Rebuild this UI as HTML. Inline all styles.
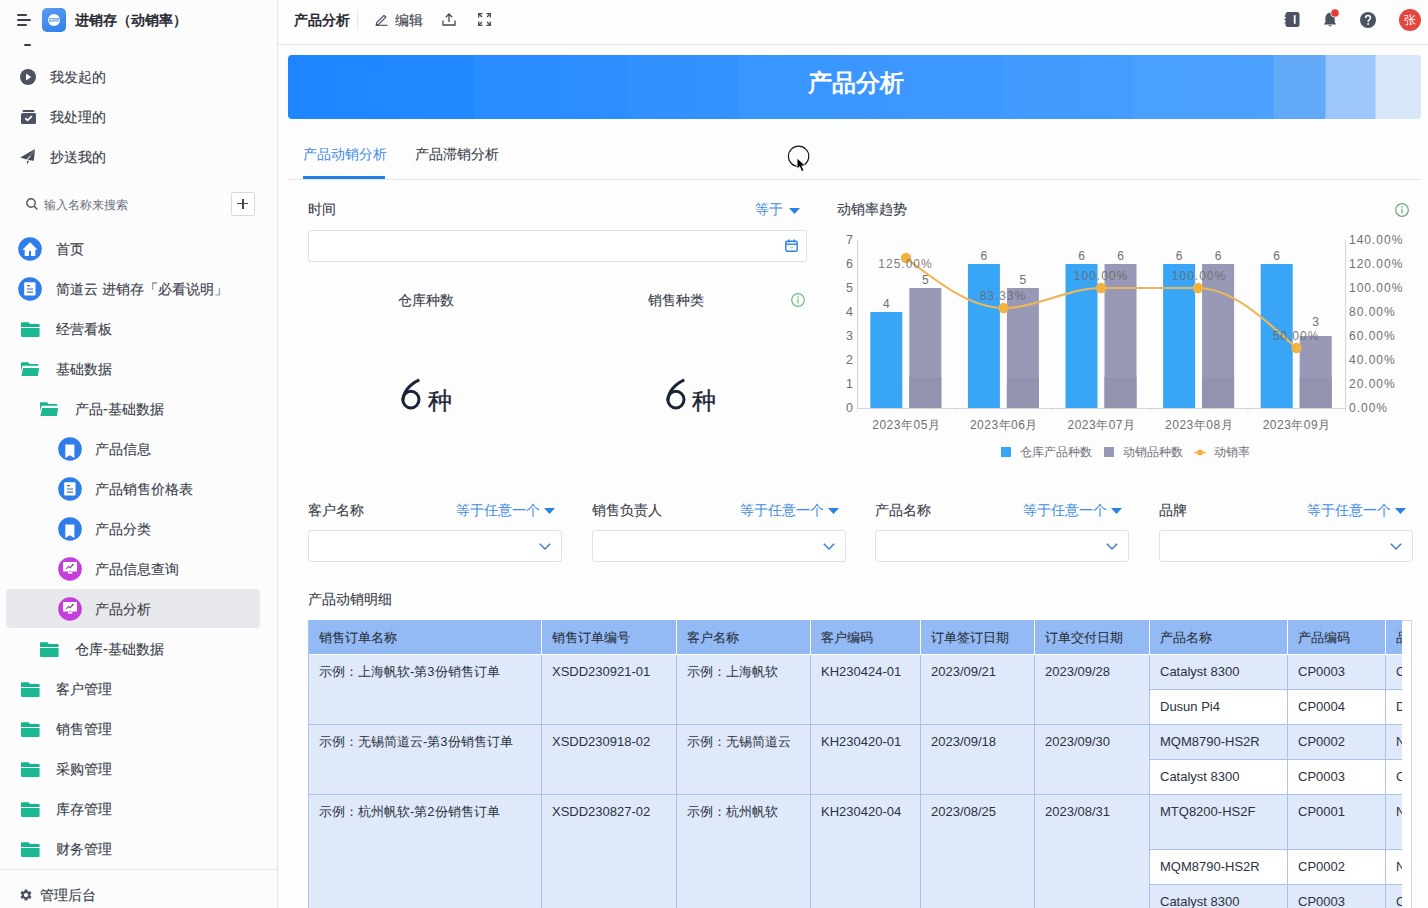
<!DOCTYPE html>
<html><head><meta charset="utf-8">
<style>
*{box-sizing:border-box;margin:0;padding:0}
html,body{width:1428px;height:908px;overflow:hidden;background:#fdfdfd;font-family:"Liberation Sans",sans-serif}
.a{position:absolute;white-space:nowrap;line-height:1}
.t14{font-size:14px;color:#3a3f4b;-webkit-text-stroke:.12px currentColor}
.t13{font-size:13px;color:#3a3f4b;-webkit-text-stroke:.1px currentColor}
.t12{font-size:12px}
svg{position:absolute;overflow:visible}
#side{position:absolute;left:0;top:0;width:277px;height:908px;background:#fcfcfc}
#sideb{position:absolute;left:277px;top:0;width:1px;height:908px;background:#e6e6e6}
.vl,.cl,.yl,.rl,.pl{font-family:"Liberation Sans",sans-serif;font-size:12px;fill:#707070}
.vl,.pl{text-anchor:middle}
.pl{letter-spacing:1px;fill:#6a6a6a;fill-opacity:.9}
.cl{font-size:12px;text-anchor:middle;letter-spacing:.5px}
.yl{text-anchor:end;font-size:12.5px}
.rl{letter-spacing:1px}
</style></head><body>
<!-- SIDEBAR -->
<div id="side"></div>
<div id="sideb"></div>
<!-- hamburger -->
<div class="a" style="left:17px;top:14px;width:10px;height:2px;background:#3b3f48;border-radius:1px"></div>
<div class="a" style="left:17px;top:19px;width:14px;height:2px;background:#3b3f48;border-radius:1px"></div>
<div class="a" style="left:17px;top:24px;width:10px;height:2px;background:#3b3f48;border-radius:1px"></div>
<!-- app icon -->
<div class="a" style="left:42px;top:8px;width:24px;height:24px;border-radius:5px;background:linear-gradient(160deg,#5b9cf3,#2f7fea)"></div>
<div class="a" style="left:48px;top:14px;width:12px;height:12px;border-radius:6px;background:#fff"></div>
<div class="a" style="left:49px;top:17px;width:10px;font-size:5px;font-weight:bold;color:#4a8ef0;text-align:center;line-height:6px">ERP</div>
<div class="a" style="left:75px;top:13px;font-size:14px;color:#1f2430;-webkit-text-stroke:.55px #1f2430">进销存（动销率）</div>
<!-- tiny dash -->
<div class="a" style="left:24px;top:44px;width:7px;height:2px;background:#3b3f48;border-radius:1px"></div>

<!-- personal items -->
<svg style="left:20px;top:69px" width="16" height="16" viewBox="0 0 16 16"><circle cx="8" cy="8" r="8" fill="#4b5261"/><path d="M6 4.6v6.8l5.2-3.4z" fill="#fff"/></svg>
<div class="a t14" style="left:50px;top:70px">我发起的</div>
<svg style="left:21px;top:110px" width="15" height="14" viewBox="0 0 15 14"><rect x="1.5" y="0" width="12" height="2" rx="1" fill="#4b5261"/><rect x="0" y="3" width="15" height="11" rx="1.5" fill="#4b5261"/><path d="M4.3 8.2l2.3 2.2 4.2-4.2" stroke="#fff" stroke-width="1.7" fill="none"/></svg>
<div class="a t14" style="left:50px;top:110px">我处理的</div>
<svg style="left:20px;top:149px" width="16" height="16" viewBox="0 0 16 16"><path d="M0.2 8.4L15 0.1 10.2 6.5 6.6 10.6z" fill="#474d5a"/><path d="M15 0.1L13.8 11.8 7.6 10.9 10.9 6.9z" fill="#474d5a"/><path d="M6.8 12.1L8.9 11.7 7.5 15.4z" fill="#474d5a"/><path d="M15 0.1L10 7.1 11.1 7.3z" fill="#474d5a"/></svg>
<div class="a t14" style="left:50px;top:150px">抄送我的</div>

<!-- search -->
<svg style="left:26px;top:198px" width="12" height="12" viewBox="0 0 12 12"><circle cx="5" cy="5" r="4.2" stroke="#4b5261" stroke-width="1.4" fill="none"/><path d="M8.2 8.2l3.2 3.2" stroke="#4b5261" stroke-width="1.4"/></svg>
<div class="a t12" style="left:44px;top:199px;color:#6b7180">输入名称来搜索</div>
<div class="a" style="left:231px;top:192px;width:24px;height:24px;border:1px solid #d9dadd;border-radius:2px;background:#fff"></div>
<div class="a" style="left:237px;top:203px;width:11px;height:1.2px;background:#3f4552"></div>
<div class="a" style="left:242.4px;top:198.5px;width:1.2px;height:10.5px;background:#3f4552"></div>

<!-- nav tree -->
<div class="a" style="left:6px;top:589px;width:254px;height:39px;background:#e7e8eb;border-radius:4px"></div>
<svg style="left:18px;top:237px" width="24" height="24" viewBox="0 0 24 24"><circle cx="12" cy="12" r="11.8" fill="#2f7ceb"/><path d="M12 5.2L4.4 12.7h2.3v6.2h4.3v-4.2a1 1 0 0 1 2 0v4.2h4.3v-6.2h2.3z" fill="#fff"/></svg>
<div class="a t14" style="left:56px;top:242px">首页</div>
<svg style="left:18px;top:277px" width="24" height="24" viewBox="0 0 24 24"><circle cx="12" cy="12" r="11.8" fill="#2f7ceb"/><rect x="6.2" y="5.3" width="11.3" height="13.2" rx=".8" fill="#fff"/><rect x="8.9" y="8" width="3.1" height="1.3" fill="#5a6a90"/><rect x="8.9" y="11.3" width="6.1" height="1.4" fill="#6d8fd8"/><rect x="8.9" y="14.4" width="6.1" height="1.4" fill="#6f7fa8"/></svg>
<div class="a t14" style="left:56px;top:282px">简道云 进销存「必看说明」</div>
<svg style="left:21px;top:322px" width="19" height="15" viewBox="0 0 19 15"><path d="M0 1.1Q0 .3 .8 .3h6.7l1.4 1.6h9q.7 0 .7.7v2.3H0z" fill="#15b48f"/><path d="M0 5.9h18.6v8.2q0 .8-.8.8H.8q-.8 0-.8-.8z" fill="#1bb893"/></svg>
<div class="a t14" style="left:56px;top:322px">经营看板</div>
<svg style="left:21px;top:362px" width="19" height="15" viewBox="0 0 19 15"><path d="M0 1Q0 .3 .7 .3h6.4l1.4 1.6h8.1q.7 0 .7.7v1.1H1.6L0 9z" fill="#15b48f"/><path d="M2.1 6H18.2L16.9 14H.4z" fill="#1bb893"/></svg>
<div class="a t14" style="left:56px;top:362px">基础数据</div>
<svg style="left:40px;top:402px" width="19" height="15" viewBox="0 0 19 15"><path d="M0 1Q0 .3 .7 .3h6.4l1.4 1.6h8.1q.7 0 .7.7v1.1H1.6L0 9z" fill="#15b48f"/><path d="M2.1 6H18.2L16.9 14H.4z" fill="#1bb893"/></svg>
<div class="a t14" style="left:75px;top:402px">产品-基础数据</div>
<svg style="left:58px;top:437px" width="24" height="24" viewBox="0 0 24 24"><circle cx="12" cy="12" r="11.8" fill="#2f7ceb"/><path d="M7.3 7.6h9.1v13.5l-4.55-2.8-4.55 2.8z" fill="#fff"/></svg>
<div class="a t14" style="left:95px;top:442px">产品信息</div>
<svg style="left:58px;top:477px" width="24" height="24" viewBox="0 0 24 24"><circle cx="12" cy="12" r="11.8" fill="#2f7ceb"/><rect x="6.2" y="5.3" width="11.3" height="13.2" rx=".8" fill="#fff"/><rect x="8.9" y="8" width="3.1" height="1.3" fill="#5a6a90"/><rect x="8.9" y="11.3" width="6.1" height="1.4" fill="#6d8fd8"/><rect x="8.9" y="14.4" width="6.1" height="1.4" fill="#6f7fa8"/></svg>
<div class="a t14" style="left:95px;top:482px">产品销售价格表</div>
<svg style="left:58px;top:517px" width="24" height="24" viewBox="0 0 24 24"><circle cx="12" cy="12" r="11.8" fill="#2f7ceb"/><path d="M7.3 7.6h9.1v13.5l-4.55-2.8-4.55 2.8z" fill="#fff"/></svg>
<div class="a t14" style="left:95px;top:522px">产品分类</div>
<svg style="left:58px;top:557px" width="24" height="24" viewBox="0 0 24 24"><circle cx="12" cy="12" r="11.8" fill="#c53ddd"/><rect x="5" y="5" width="14" height="9.5" rx=".5" fill="#fff"/><rect x="9.9" y="15" width="4.4" height="1.6" fill="#fff"/><path d="M8.2 12l2.3-2.6 1.6 1.3 2.9-3.1" stroke="#7a3a8a" stroke-width="1.1" fill="none"/><path d="M13.9 7.2l2-.5-.4 2z" fill="#7a3a8a"/></svg>
<div class="a t14" style="left:95px;top:562px">产品信息查询</div>
<svg style="left:58px;top:597px" width="24" height="24" viewBox="0 0 24 24"><circle cx="12" cy="12" r="11.8" fill="#c53ddd"/><rect x="5" y="5" width="14" height="9.5" rx=".5" fill="#fff"/><rect x="9.9" y="15" width="4.4" height="1.6" fill="#fff"/><path d="M8.2 12l2.3-2.6 1.6 1.3 2.9-3.1" stroke="#7a3a8a" stroke-width="1.1" fill="none"/><path d="M13.9 7.2l2-.5-.4 2z" fill="#7a3a8a"/></svg>
<div class="a t14" style="left:95px;top:602px">产品分析</div>
<svg style="left:40px;top:642px" width="19" height="15" viewBox="0 0 19 15"><path d="M0 1.1Q0 .3 .8 .3h6.7l1.4 1.6h9q.7 0 .7.7v2.3H0z" fill="#15b48f"/><path d="M0 5.9h18.6v8.2q0 .8-.8.8H.8q-.8 0-.8-.8z" fill="#1bb893"/></svg>
<div class="a t14" style="left:75px;top:642px">仓库-基础数据</div>
<svg style="left:21px;top:682px" width="19" height="15" viewBox="0 0 19 15"><path d="M0 1.1Q0 .3 .8 .3h6.7l1.4 1.6h9q.7 0 .7.7v2.3H0z" fill="#15b48f"/><path d="M0 5.9h18.6v8.2q0 .8-.8.8H.8q-.8 0-.8-.8z" fill="#1bb893"/></svg>
<div class="a t14" style="left:56px;top:682px">客户管理</div>
<svg style="left:21px;top:722px" width="19" height="15" viewBox="0 0 19 15"><path d="M0 1.1Q0 .3 .8 .3h6.7l1.4 1.6h9q.7 0 .7.7v2.3H0z" fill="#15b48f"/><path d="M0 5.9h18.6v8.2q0 .8-.8.8H.8q-.8 0-.8-.8z" fill="#1bb893"/></svg>
<div class="a t14" style="left:56px;top:722px">销售管理</div>
<svg style="left:21px;top:762px" width="19" height="15" viewBox="0 0 19 15"><path d="M0 1.1Q0 .3 .8 .3h6.7l1.4 1.6h9q.7 0 .7.7v2.3H0z" fill="#15b48f"/><path d="M0 5.9h18.6v8.2q0 .8-.8.8H.8q-.8 0-.8-.8z" fill="#1bb893"/></svg>
<div class="a t14" style="left:56px;top:762px">采购管理</div>
<svg style="left:21px;top:802px" width="19" height="15" viewBox="0 0 19 15"><path d="M0 1.1Q0 .3 .8 .3h6.7l1.4 1.6h9q.7 0 .7.7v2.3H0z" fill="#15b48f"/><path d="M0 5.9h18.6v8.2q0 .8-.8.8H.8q-.8 0-.8-.8z" fill="#1bb893"/></svg>
<div class="a t14" style="left:56px;top:802px">库存管理</div>
<svg style="left:21px;top:842px" width="19" height="15" viewBox="0 0 19 15"><path d="M0 1.1Q0 .3 .8 .3h6.7l1.4 1.6h9q.7 0 .7.7v2.3H0z" fill="#15b48f"/><path d="M0 5.9h18.6v8.2q0 .8-.8.8H.8q-.8 0-.8-.8z" fill="#1bb893"/></svg>
<div class="a t14" style="left:56px;top:842px">财务管理</div>
<div class="a" style="left:0;top:869px;width:277px;height:1px;background:#e6e6e6"></div>
<svg style="left:19px;top:888px" width="14" height="14" viewBox="0 0 24 24"><path fill="#4b5261" d="M19.14 12.94c.04-.3.06-.61.06-.94 0-.32-.02-.64-.07-.94l2.03-1.58a.49.49 0 0 0 .12-.61l-1.92-3.32a.488.488 0 0 0-.59-.22l-2.39.96c-.5-.38-1.03-.7-1.62-.94l-.36-2.54a.484.484 0 0 0-.48-.41h-3.84c-.24 0-.43.17-.47.41l-.36 2.54c-.59.24-1.13.57-1.62.94l-2.39-.96c-.22-.08-.47 0-.59.22L2.74 8.87c-.12.21-.08.47.12.61l2.030 1.58c-.05.3-.09.63-.09.94s.02.64.07.94l-2.03 1.58a.49.49 0 0 0-.12.61l1.92 3.32c.12.22.37.29.59.22l2.39-.96c.5.38 1.030.7 1.62.94l.36 2.54c.05.24.24.41.48.41h3.84c.24 0 .44-.17.47-.41l.36-2.54c.59-.24 1.13-.56 1.62-.94l2.39.96c.22.08.47 0 .59-.22l1.92-3.32c.12-.22.07-.47-.12-.61l-2.01-1.58zM12 15.6c-1.98 0-3.6-1.62-3.6-3.6s1.62-3.6 3.6-3.6 3.6 1.62 3.6 3.6-1.62 3.6-3.6 3.6z"/></svg>
<div class="a t14" style="left:40px;top:888px">管理后台</div>
<!-- MAIN -->
<div class="a" style="left:278px;top:0;width:1150px;height:43px;background:#fdfdfd"></div>
<div class="a" style="left:278px;top:44px;width:1150px;height:1px;background:#e3e4e6"></div>
<div class="a" style="left:294px;top:13px;font-size:14px;color:#1f2430;-webkit-text-stroke:.55px #1f2430">产品分析</div>
<div class="a" style="left:357px;top:10px;width:1px;height:20px;background:#e6e7e9"></div>
<svg style="left:375px;top:13px" width="13" height="13" viewBox="0 0 13 13"><path d="M1.5 9.8L9 2.3l1.8 1.8-7.5 7.5H1.5z" stroke="#454a55" stroke-width="1.2" fill="none" stroke-linejoin="round"/><path d="M0.5 12.3h12" stroke="#454a55" stroke-width="1.1"/></svg>
<div class="a t14" style="left:395px;top:13px;color:#3a3f4b">编辑</div>
<svg style="left:442px;top:13px" width="14" height="13" viewBox="0 0 14 13"><path d="M7 9V1M3.8 4.2L7 1l3.2 3.2" stroke="#454a55" stroke-width="1.3" fill="none"/><path d="M1 7.5v4.5h12V7.5" stroke="#454a55" stroke-width="1.3" fill="none"/></svg>
<svg style="left:478px;top:13px" width="13" height="13" viewBox="0 0 13 13"><g stroke="#454a55" stroke-width="1.3" fill="none"><path d="M0.7 4.5V0.7h3.8M12.3 4.5V0.7H8.5M0.7 8.5v3.8h3.8M12.3 8.5v3.8H8.5"/><path d="M1 1l3 3M12 1L9 4M1 12l3-3M12 12L9 9"/></g></svg>
<svg style="left:1284px;top:12px" width="16" height="15" viewBox="0 0 16 15"><rect x="1.5" y="0" width="14" height="15" rx="2.5" fill="#4b5261"/><rect x="9.8" y="3.2" width="1.8" height="8.6" fill="#fff"/><path d="M0.5 4h2M0.5 7.5h2M0.5 11h2" stroke="#4b5261" stroke-width="1.2"/></svg>
<svg style="left:1323px;top:10px" width="16" height="18" viewBox="0 0 16 18"><path d="M7 2.5c-2.8.4-4.6 2.8-4.6 5.6v4.2L0.8 14.4h12.5l-1.6-2.1V8.1c0-2.8-1.8-5.2-4.7-5.6z" fill="#4b5261"/><path d="M5 15.3q2 2.2 4 0z" fill="#4b5261"/><circle cx="12" cy="3" r="4.6" fill="#fdfdfd"/><circle cx="12" cy="3" r="3.8" fill="#e83a37"/></svg>
<svg style="left:1360px;top:11.5px" width="16" height="16" viewBox="0 0 16 16"><circle cx="8" cy="8" r="8" fill="#4b5261"/><path d="M5.6 6.1q0-2.5 2.4-2.5t2.4 2.3q0 1.2-1.2 1.9-1 .6-1 1.6v.5" stroke="#fff" stroke-width="1.5" fill="none"/><circle cx="8.1" cy="12" r="1" fill="#fff"/></svg>
<div class="a" style="left:1399px;top:9px;width:22px;height:22px;border-radius:11px;background:#e5453f"></div>
<div class="a" style="left:1404px;top:14px;font-size:12px;color:#fff">张</div>
<div class="a" style="left:288px;top:55px;width:1133px;height:64px;border-radius:4px;overflow:hidden;background:linear-gradient(90deg,#1d86ff 0px,#2288ff 185px,#288cff 186px,#2c8eff 338px,#3190ff 339px,#3492ff 450px,#3995ff 451px,#3d98ff 715px,#419aff 716px,#449cff 844px,#4aa0ff 845px,#4ca1ff 985px,#62aaf8 986px,#62aaf8 1037px,#9dc7fc 1038px,#9dc7fc 1087px,#d7e6f8 1088px)"></div>
<div class="a" style="left:808px;top:72px;font-size:23.5px;font-weight:bold;color:#fff">产品分析</div>
<div class="a t14" style="left:303px;top:147px;color:#3d8be8;-webkit-text-stroke:0">产品动销分析</div>
<div class="a t14" style="left:415px;top:147px">产品滞销分析</div>
<div class="a" style="left:288px;top:179px;width:1133px;height:1px;background:#e3e4e6"></div>
<div class="a" style="left:303px;top:176px;width:82px;height:3px;background:#2580e6"></div>
<div class="a t14" style="left:308px;top:202px">时间</div>
<div class="a t14" style="left:755px;top:202px;color:#3d8be8;-webkit-text-stroke:0">等于</div>
<svg style="left:789px;top:208px" width="11" height="6" viewBox="0 0 11 6"><path d="M0 0h11L5.5 6z" fill="#2b82e6"/></svg>
<div class="a" style="left:308px;top:230px;width:499px;height:32px;border:1px solid #dfe1e5;border-radius:2px;background:#fff"></div>
<svg style="left:785px;top:239px" width="13" height="13" viewBox="0 0 13 13"><rect x="0.8" y="2.2" width="11.4" height="10" rx="1.5" stroke="#2b82e6" stroke-width="1.4" fill="none"/><path d="M0.8 5.2h11.4" stroke="#2b82e6" stroke-width="1.4"/><path d="M3.8 0.5v3M9.2 0.5v3" stroke="#2b82e6" stroke-width="1.4"/><path d="M5.6 8.2l1 1 1-1" stroke="#2b82e6" stroke-width=".8" fill="none"/></svg>
<div class="a t14" style="left:398px;top:293px">仓库种数</div>
<div class="a t14" style="left:648px;top:293px">销售种类</div>
<svg style="left:791px;top:293px" width="14" height="14" viewBox="0 0 14 14"><circle cx="7" cy="7" r="6.3" stroke="#6cc07c" stroke-width="1.2" fill="none"/><rect x="6.4" y="5.8" width="1.2" height="4.6" fill="#6cc07c"/><circle cx="7" cy="4" r=".8" fill="#6cc07c"/></svg>
<svg style="left:395px;top:374px" width="32" height="40" viewBox="660 374 32 40"><ellipse cx="675.9" cy="399.6" rx="8.1" ry="8.3" stroke="#1b2336" stroke-width="3" fill="none"/><path d="M684.3 379.8C675.5 384 668.6 391 667.9 400.5" stroke="#1b2336" stroke-width="3" fill="none"/></svg>
<div class="a" style="left:428px;top:389px;font-size:24px;color:#1b2336;-webkit-text-stroke:.35px #1b2336">种</div>
<svg style="left:660px;top:374px" width="32" height="40" viewBox="660 374 32 40"><ellipse cx="675.9" cy="399.6" rx="8.1" ry="8.3" stroke="#1b2336" stroke-width="3" fill="none"/><path d="M684.3 379.8C675.5 384 668.6 391 667.9 400.5" stroke="#1b2336" stroke-width="3" fill="none"/></svg>
<div class="a" style="left:692px;top:389px;font-size:24px;color:#1b2336;-webkit-text-stroke:.35px #1b2336">种</div>
<div class="a t14" style="left:837px;top:202px">动销率趋势</div>
<svg style="left:1395px;top:203px" width="14" height="14" viewBox="0 0 14 14"><circle cx="7" cy="7" r="6.3" stroke="#6aa878" stroke-width="1.2" fill="none"/><rect x="6.4" y="5.8" width="1.2" height="4.6" fill="#6aa878"/><circle cx="7" cy="4" r=".8" fill="#6aa878"/></svg>
<svg style="left:0;top:0" width="1428" height="908" viewBox="0 0 1428 908">
<g stroke="#d4d4d8" stroke-width="1" fill="none"><path d="M857.5 240v169M1345.5 240v169M857.5 408.5h488"/></g>
<path d="M857.5 409v3" stroke="#e4e4e8" stroke-width="1"/>
<path d="M955.1 409v3" stroke="#e4e4e8" stroke-width="1"/>
<path d="M1052.7 409v3" stroke="#e4e4e8" stroke-width="1"/>
<path d="M1150.3 409v3" stroke="#e4e4e8" stroke-width="1"/>
<path d="M1247.9 409v3" stroke="#e4e4e8" stroke-width="1"/>
<path d="M1345.5 409v3" stroke="#e4e4e8" stroke-width="1"/>
<rect x="870.3" y="312" width="32" height="96" fill="#39a5f6"/>
<rect x="909.3" y="288" width="32" height="120" fill="#9799b7"/>
<rect x="909.3" y="377" width="32" height="31" fill="#9293af"/>
<text x="886.3" y="308" class="vl">4</text>
<text x="925.3" y="284" class="vl">5</text>
<text x="906.3" y="429" class="cl">2023年05月</text>
<rect x="967.9" y="264" width="32" height="144" fill="#39a5f6"/>
<rect x="1006.9" y="288" width="32" height="120" fill="#9799b7"/>
<rect x="1006.9" y="377" width="32" height="31" fill="#9293af"/>
<text x="983.9" y="260" class="vl">6</text>
<text x="1022.9" y="284" class="vl">5</text>
<text x="1003.9" y="429" class="cl">2023年06月</text>
<rect x="1065.5" y="264" width="32" height="144" fill="#39a5f6"/>
<rect x="1104.5" y="264" width="32" height="144" fill="#9799b7"/>
<rect x="1104.5" y="377" width="32" height="31" fill="#9293af"/>
<text x="1081.5" y="260" class="vl">6</text>
<text x="1120.5" y="260" class="vl">6</text>
<text x="1101.5" y="429" class="cl">2023年07月</text>
<rect x="1163.1" y="264" width="32" height="144" fill="#39a5f6"/>
<rect x="1202.1" y="264" width="32" height="144" fill="#9799b7"/>
<rect x="1202.1" y="377" width="32" height="31" fill="#9293af"/>
<text x="1179.1" y="260" class="vl">6</text>
<text x="1218.1" y="260" class="vl">6</text>
<text x="1199.1" y="429" class="cl">2023年08月</text>
<rect x="1260.7" y="264" width="32" height="144" fill="#39a5f6"/>
<rect x="1299.7" y="336" width="32" height="72" fill="#9799b7"/>
<rect x="1299.7" y="377" width="32" height="31" fill="#9293af"/>
<text x="1276.7" y="260" class="vl">6</text>
<text x="1315.7" y="332" class="vl" dy="-6">3</text>
<text x="1296.7" y="429" class="cl">2023年09月</text>
<text x="853" y="412" class="yl">0</text>
<text x="853" y="388" class="yl">1</text>
<text x="853" y="364" class="yl">2</text>
<text x="853" y="340" class="yl">3</text>
<text x="853" y="316" class="yl">4</text>
<text x="853" y="292" class="yl">5</text>
<text x="853" y="268" class="yl">6</text>
<text x="853" y="244" class="yl">7</text>
<text x="1349" y="412" class="rl">0.00%</text>
<text x="1349" y="388" class="rl">20.00%</text>
<text x="1349" y="364" class="rl">40.00%</text>
<text x="1349" y="340" class="rl">60.00%</text>
<text x="1349" y="316" class="rl">80.00%</text>
<text x="1349" y="292" class="rl">100.00%</text>
<text x="1349" y="268" class="rl">120.00%</text>
<text x="1349" y="244" class="rl">140.00%</text>
<path d="M906 258C938.5 283 971 308 1003.5 308S1068.5 288 1101 288L1198 288C1231 288 1263.7 318 1296.5 348" stroke="#edb657" stroke-width="2.2" fill="none"/>
<circle cx="906" cy="258" r="5.2" fill="#f1b240"/>
<circle cx="1003.5" cy="308" r="5.2" fill="#f1b240"/>
<circle cx="1101" cy="288" r="5.2" fill="#f1b240"/>
<circle cx="1198" cy="288" r="5.2" fill="#f1b240"/>
<circle cx="1296.5" cy="348" r="5.2" fill="#f1b240"/>
<text x="905.5" y="268" class="pl">125.00%</text>
<text x="1003" y="300" class="pl">83.33%</text>
<text x="1101" y="280" class="pl">100.00%</text>
<text x="1199" y="280" class="pl">100.00%</text>
<text x="1296" y="340" class="pl">50.00%</text>
<rect x="1001" y="447" width="10" height="10" fill="#39a5f6"/>
<rect x="1104" y="447" width="10" height="10" fill="#9799b7"/>
<path d="M1194 452.5h12" stroke="#eeb553" stroke-width="1.5"/><circle cx="1200" cy="452.5" r="3" fill="#f2b13f"/>
</svg>
<div class="a t12" style="left:1020px;top:446px;color:#707278">仓库产品种数</div>
<div class="a t12" style="left:1123px;top:446px;color:#707278">动销品种数</div>
<div class="a t12" style="left:1214px;top:446px;color:#707278">动销率</div>
<div class="a t14" style="left:308px;top:503px">客户名称</div>
<div class="a t14" style="left:456px;top:503px;color:#3d8be8;-webkit-text-stroke:0">等于任意一个</div>
<svg style="left:544px;top:508px" width="11" height="6" viewBox="0 0 11 6"><path d="M0 0h11L5.5 6z" fill="#2b82e6"/></svg>
<div class="a" style="left:308px;top:530px;width:254px;height:32px;border:1px solid #dfe1e5;border-radius:3px;background:#fff"></div>
<svg style="left:539px;top:543px" width="12" height="7" viewBox="0 0 12 7"><path d="M0.8 0.8L6 6l5.2-5.2" stroke="#3d7fc8" stroke-width="1.5" fill="none"/></svg>
<div class="a t14" style="left:591.5px;top:503px">销售负责人</div>
<div class="a t14" style="left:739.5px;top:503px;color:#3d8be8;-webkit-text-stroke:0">等于任意一个</div>
<svg style="left:827.5px;top:508px" width="11" height="6" viewBox="0 0 11 6"><path d="M0 0h11L5.5 6z" fill="#2b82e6"/></svg>
<div class="a" style="left:591.5px;top:530px;width:254px;height:32px;border:1px solid #dfe1e5;border-radius:3px;background:#fff"></div>
<svg style="left:822.5px;top:543px" width="12" height="7" viewBox="0 0 12 7"><path d="M0.8 0.8L6 6l5.2-5.2" stroke="#3d7fc8" stroke-width="1.5" fill="none"/></svg>
<div class="a t14" style="left:875px;top:503px">产品名称</div>
<div class="a t14" style="left:1023px;top:503px;color:#3d8be8;-webkit-text-stroke:0">等于任意一个</div>
<svg style="left:1111px;top:508px" width="11" height="6" viewBox="0 0 11 6"><path d="M0 0h11L5.5 6z" fill="#2b82e6"/></svg>
<div class="a" style="left:875px;top:530px;width:254px;height:32px;border:1px solid #dfe1e5;border-radius:3px;background:#fff"></div>
<svg style="left:1106px;top:543px" width="12" height="7" viewBox="0 0 12 7"><path d="M0.8 0.8L6 6l5.2-5.2" stroke="#3d7fc8" stroke-width="1.5" fill="none"/></svg>
<div class="a t14" style="left:1158.5px;top:503px">品牌</div>
<div class="a t14" style="left:1306.5px;top:503px;color:#3d8be8;-webkit-text-stroke:0">等于任意一个</div>
<svg style="left:1394.5px;top:508px" width="11" height="6" viewBox="0 0 11 6"><path d="M0 0h11L5.5 6z" fill="#2b82e6"/></svg>
<div class="a" style="left:1158.5px;top:530px;width:254px;height:32px;border:1px solid #dfe1e5;border-radius:3px;background:#fff"></div>
<svg style="left:1389.5px;top:543px" width="12" height="7" viewBox="0 0 12 7"><path d="M0.8 0.8L6 6l5.2-5.2" stroke="#3d7fc8" stroke-width="1.5" fill="none"/></svg>
<div class="a t14" style="left:308px;top:592px">产品动销明细</div>
<div class="a" style="left:308px;top:620px;width:1094px;height:288px;overflow:hidden">
<div class="a" style="left:0px;top:0px;width:1200px;height:34px;background:#93baf4"></div>
<div class="a" style="left:0px;top:34px;width:1200px;height:300px;background:#dfe9f9"></div>
<div class="a" style="left:841px;top:69px;width:400px;height:35px;background:#ffffff"></div>
<div class="a" style="left:841px;top:139px;width:400px;height:35px;background:#ffffff"></div>
<div class="a" style="left:841px;top:229px;width:400px;height:35px;background:#ffffff"></div>
<div class="a" style="left:233px;top:0px;width:1px;height:34px;background:#ffffff"></div>
<div class="a" style="left:368px;top:0px;width:1px;height:34px;background:#ffffff"></div>
<div class="a" style="left:502px;top:0px;width:1px;height:34px;background:#ffffff"></div>
<div class="a" style="left:612px;top:0px;width:1px;height:34px;background:#ffffff"></div>
<div class="a" style="left:726px;top:0px;width:1px;height:34px;background:#ffffff"></div>
<div class="a" style="left:841px;top:0px;width:1px;height:34px;background:#ffffff"></div>
<div class="a" style="left:979px;top:0px;width:1px;height:34px;background:#ffffff"></div>
<div class="a" style="left:1077px;top:0px;width:1px;height:34px;background:#ffffff"></div>
<div class="a" style="left:0px;top:34px;width:1200px;height:1px;background:#ffffff"></div>
<div class="a" style="left:233px;top:35px;width:1px;height:260px;background:#aac3ea"></div>
<div class="a" style="left:368px;top:35px;width:1px;height:260px;background:#aac3ea"></div>
<div class="a" style="left:502px;top:35px;width:1px;height:260px;background:#aac3ea"></div>
<div class="a" style="left:612px;top:35px;width:1px;height:260px;background:#aac3ea"></div>
<div class="a" style="left:726px;top:35px;width:1px;height:260px;background:#aac3ea"></div>
<div class="a" style="left:841px;top:35px;width:1px;height:260px;background:#aac3ea"></div>
<div class="a" style="left:979px;top:35px;width:1px;height:260px;background:#aac3ea"></div>
<div class="a" style="left:1077px;top:35px;width:1px;height:260px;background:#aac3ea"></div>
<div class="a" style="left:0px;top:104px;width:1200px;height:1px;background:#aac3ea"></div>
<div class="a" style="left:0px;top:174px;width:1200px;height:1px;background:#aac3ea"></div>
<div class="a" style="left:841px;top:69px;width:400px;height:1px;background:#aac3ea"></div>
<div class="a" style="left:841px;top:139px;width:400px;height:1px;background:#aac3ea"></div>
<div class="a" style="left:841px;top:229px;width:400px;height:1px;background:#aac3ea"></div>
<div class="a" style="left:841px;top:264px;width:400px;height:1px;background:#aac3ea"></div>
<div class="a" style="left:0px;top:0px;width:1px;height:300px;background:#aac3ea"></div>
<div class="a" style="left:11px;top:11px;font-size:13px;color:#2c3240;-webkit-text-stroke:.12px #2c3240">销售订单名称</div>
<div class="a" style="left:244px;top:11px;font-size:13px;color:#2c3240;-webkit-text-stroke:.12px #2c3240">销售订单编号</div>
<div class="a" style="left:379px;top:11px;font-size:13px;color:#2c3240;-webkit-text-stroke:.12px #2c3240">客户名称</div>
<div class="a" style="left:513px;top:11px;font-size:13px;color:#2c3240;-webkit-text-stroke:.12px #2c3240">客户编码</div>
<div class="a" style="left:623px;top:11px;font-size:13px;color:#2c3240;-webkit-text-stroke:.12px #2c3240">订单签订日期</div>
<div class="a" style="left:737px;top:11px;font-size:13px;color:#2c3240;-webkit-text-stroke:.12px #2c3240">订单交付日期</div>
<div class="a" style="left:852px;top:11px;font-size:13px;color:#2c3240;-webkit-text-stroke:.12px #2c3240">产品名称</div>
<div class="a" style="left:990px;top:11px;font-size:13px;color:#2c3240;-webkit-text-stroke:.12px #2c3240">产品编码</div>
<div class="a" style="left:1088px;top:11px;font-size:13px;color:#2c3240;-webkit-text-stroke:.12px #2c3240">品牌名称</div>
<div class="a" style="left:11px;top:45px;font-size:13px;color:#2c3240;">示例：上海帆软-第3份销售订单</div>
<div class="a" style="left:244px;top:45px;font-size:13px;color:#2c3240;">XSDD230921-01</div>
<div class="a" style="left:379px;top:45px;font-size:13px;color:#2c3240;">示例：上海帆软</div>
<div class="a" style="left:513px;top:45px;font-size:13px;color:#2c3240;">KH230424-01</div>
<div class="a" style="left:623px;top:45px;font-size:13px;color:#2c3240;">2023/09/21</div>
<div class="a" style="left:737px;top:45px;font-size:13px;color:#2c3240;">2023/09/28</div>
<div class="a" style="left:11px;top:115px;font-size:13px;color:#2c3240;">示例：无锡简道云-第3份销售订单</div>
<div class="a" style="left:244px;top:115px;font-size:13px;color:#2c3240;">XSDD230918-02</div>
<div class="a" style="left:379px;top:115px;font-size:13px;color:#2c3240;">示例：无锡简道云</div>
<div class="a" style="left:513px;top:115px;font-size:13px;color:#2c3240;">KH230420-01</div>
<div class="a" style="left:623px;top:115px;font-size:13px;color:#2c3240;">2023/09/18</div>
<div class="a" style="left:737px;top:115px;font-size:13px;color:#2c3240;">2023/09/30</div>
<div class="a" style="left:11px;top:185px;font-size:13px;color:#2c3240;">示例：杭州帆软-第2份销售订单</div>
<div class="a" style="left:244px;top:185px;font-size:13px;color:#2c3240;">XSDD230827-02</div>
<div class="a" style="left:379px;top:185px;font-size:13px;color:#2c3240;">示例：杭州帆软</div>
<div class="a" style="left:513px;top:185px;font-size:13px;color:#2c3240;">KH230420-04</div>
<div class="a" style="left:623px;top:185px;font-size:13px;color:#2c3240;">2023/08/25</div>
<div class="a" style="left:737px;top:185px;font-size:13px;color:#2c3240;">2023/08/31</div>
<div class="a" style="left:852px;top:45px;font-size:13px;color:#2c3240;">Catalyst 8300</div>
<div class="a" style="left:990px;top:45px;font-size:13px;color:#2c3240;">CP0003</div>
<div class="a" style="left:1088px;top:45px;font-size:13px;color:#2c3240;">Cisco</div>
<div class="a" style="left:852px;top:80px;font-size:13px;color:#2c3240;">Dusun Pi4</div>
<div class="a" style="left:990px;top:80px;font-size:13px;color:#2c3240;">CP0004</div>
<div class="a" style="left:1088px;top:80px;font-size:13px;color:#2c3240;">Dusun</div>
<div class="a" style="left:852px;top:115px;font-size:13px;color:#2c3240;">MQM8790-HS2R</div>
<div class="a" style="left:990px;top:115px;font-size:13px;color:#2c3240;">CP0002</div>
<div class="a" style="left:1088px;top:115px;font-size:13px;color:#2c3240;">NVIDIA</div>
<div class="a" style="left:852px;top:150px;font-size:13px;color:#2c3240;">Catalyst 8300</div>
<div class="a" style="left:990px;top:150px;font-size:13px;color:#2c3240;">CP0003</div>
<div class="a" style="left:1088px;top:150px;font-size:13px;color:#2c3240;">Cisco</div>
<div class="a" style="left:852px;top:185px;font-size:13px;color:#2c3240;">MTQ8200-HS2F</div>
<div class="a" style="left:990px;top:185px;font-size:13px;color:#2c3240;">CP0001</div>
<div class="a" style="left:1088px;top:185px;font-size:13px;color:#2c3240;">NVIDIA</div>
<div class="a" style="left:852px;top:240px;font-size:13px;color:#2c3240;">MQM8790-HS2R</div>
<div class="a" style="left:990px;top:240px;font-size:13px;color:#2c3240;">CP0002</div>
<div class="a" style="left:1088px;top:240px;font-size:13px;color:#2c3240;">NVIDIA</div>
<div class="a" style="left:852px;top:275px;font-size:13px;color:#2c3240;">Catalyst 8300</div>
<div class="a" style="left:990px;top:275px;font-size:13px;color:#2c3240;">CP0003</div>
<div class="a" style="left:1088px;top:275px;font-size:13px;color:#2c3240;">Cisco</div>
</div>
<div class="a" style="left:1402px;top:620px;width:10px;height:288px;border:1px solid #cdd6e4;border-left:none;border-bottom:none;background:#fff"></div>
<svg style="left:787px;top:145px" width="24" height="30" viewBox="0 0 24 30"><circle cx="11.6" cy="11.3" r="10.2" stroke="#111" stroke-width="1.1" fill="none"/><path d="M10 13v11.2l2.6-2.5 2.1 4.9 2.3-1-2.1-4.7h3.8z" fill="#000" stroke="#fff" stroke-width=".9" stroke-linejoin="round"/></svg>
<div id="main6"></div>
</body></html>
